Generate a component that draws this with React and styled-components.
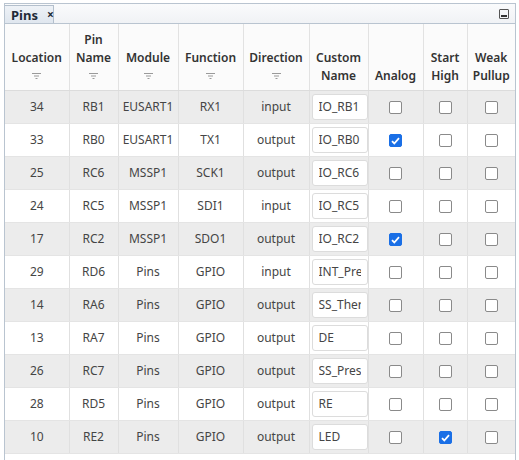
import React from 'react'
import styled, { createGlobalStyle } from 'styled-components'

const GlobalStyle = createGlobalStyle`
  html, body {
    margin: 0;
    padding: 0;
    background: #ffffff;
  }
  body {
    font-family: "Noto Sans", "Open Sans", sans-serif;
  }
`

const Panel = styled.div`
  margin: 3px 0 0 4px;
  width: 512px;
  height: 470px;
  box-sizing: border-box;
  border: 1px solid #b9c4d0;
  background: #fff;
  overflow: hidden;
`

const TabBar = styled.div`
  display: flex;
  align-items: flex-end;
  justify-content: space-between;
  height: 19px;
  background: linear-gradient(#fafbfc, #f0f2f5);
  border-bottom: 1px solid #b9c4d0;
`

const Tab = styled.div`
  display: flex;
  align-items: center;
  gap: 9px;
  width: 49px;
  height: 18px;
  box-sizing: border-box;
  padding: 0 0 0 6px;
  background: linear-gradient(#eef2f7, #dfe6ee);
  border: 1px solid #b3bfcc;
  border-bottom: none;
  border-left: none;
  font-size: 13px;
  font-weight: 700;
  color: #1e2a38;
`

const Close = styled.span`
  font-size: 12px;
  font-weight: 700;
  line-height: 1;
`

const MinButton = styled.div`
  width: 8px;
  height: 8px;
  border: 1px solid #555;
  border-radius: 1px;
  margin: 0 6px 4px 0;
  display: flex;
  align-items: center;
  justify-content: center;
  &::after {
    content: '';
    width: 6px;
    height: 2px;
    background: #333;
    margin-top: 3px;
  }
`

const Table = styled.table`
  width: 510px;
  table-layout: fixed;
  border-collapse: collapse;
  font-size: 12px;
  color: #454545;
`

const HeadCell = styled.th`
  height: 66px;
  box-sizing: border-box;
  padding: 0 2px 5px;
  vertical-align: bottom;
  text-align: center;
  font-weight: 600;
  font-size: 12px;
  line-height: 18px;
  color: #333;
  background: #fbfbfb;
  border-right: 1px solid #e2e2e2;
  border-bottom: 1px solid #dcdcdc;
  &:last-child {
    border-right: none;
  }
`

const FilterSlot = styled.div`
  height: 18px;
  display: flex;
  align-items: center;
  justify-content: center;
`

const Row = styled.tr`
  background: ${p => (p.$shade ? '#ececec' : '#ffffff')};
`

const Cell = styled.td`
  height: 33px;
  box-sizing: border-box;
  padding: 0 2px;
  text-align: center;
  vertical-align: middle;
  border-right: 1px solid #e0e0e0;
  border-bottom: 1px solid #e4e4e4;
  white-space: nowrap;
  &:last-child {
    border-right: none;
  }
`

const NameInput = styled.input`
  display: block;
  width: 56px;
  height: 26px;
  box-sizing: border-box;
  margin: 0 auto;
  padding: 0 6px;
  background: #fff;
  border: 1px solid #dcdcdc;
  border-radius: 3px;
  outline: none;
  font-family: inherit;
  font-size: 12px;
  color: #454545;
`

const Box = styled.span`
  display: inline-flex;
  align-items: center;
  justify-content: center;
  width: 13px;
  height: 13px;
  box-sizing: border-box;
  border-radius: 2px;
  vertical-align: middle;
  border: 1px solid ${p => (p.$on ? '#1a6fe6' : '#8a8a8a')};
  background: ${p => (p.$on ? '#1a6fe6' : '#ffffff')};
`

const cols = [64, 49, 60, 65, 66, 59, 55, 44, 48]

const headers = [
  { label: ['Location'], filter: true },
  { label: ['Pin', 'Name'], filter: true },
  { label: ['Module'], filter: true },
  { label: ['Function'], filter: true },
  { label: ['Direction'], filter: true },
  { label: ['Custom', 'Name'] },
  { label: ['Analog'] },
  { label: ['Start', 'High'] },
  { label: ['Weak', 'Pullup'] },
]

const pins = [
  ['34', 'RB1', 'EUSART1', 'RX1', 'input', 'IO_RB1', false, false],
  ['33', 'RB0', 'EUSART1', 'TX1', 'output', 'IO_RB0', true, false],
  ['25', 'RC6', 'MSSP1', 'SCK1', 'output', 'IO_RC6', false, false],
  ['24', 'RC5', 'MSSP1', 'SDI1', 'input', 'IO_RC5', false, false],
  ['17', 'RC2', 'MSSP1', 'SDO1', 'output', 'IO_RC2', true, false],
  ['29', 'RD6', 'Pins', 'GPIO', 'input', 'INT_Pressure', false, false],
  ['14', 'RA6', 'Pins', 'GPIO', 'output', 'SS_Thermo', false, false],
  ['13', 'RA7', 'Pins', 'GPIO', 'output', 'DE', false, false],
  ['26', 'RC7', 'Pins', 'GPIO', 'output', 'SS_Pressure', false, false],
  ['28', 'RD5', 'Pins', 'GPIO', 'output', 'RE', false, false],
  ['10', 'RE2', 'Pins', 'GPIO', 'output', 'LED', false, true],
]

function FilterIcon() {
  return (
    <FilterSlot>
      <svg width="9" height="6" viewBox="0 0 9 6">
        <path d="M0 0.5h9M2 3h5M3.5 5.5h2" stroke="#9a9a9a" strokeWidth="1" />
      </svg>
    </FilterSlot>
  )
}

function Check({ on }) {
  return (
    <Box $on={on}>
      {on && (
        <svg width="9" height="8" viewBox="0 0 9 8">
          <path d="M1 4.2l2.3 2.3L8 1.2" fill="none" stroke="#fff" strokeWidth="1.8" />
        </svg>
      )}
    </Box>
  )
}

export default function App() {
  return (
    <>
      <GlobalStyle />
      <Panel>
        <TabBar>
          <Tab>
            Pins <Close>×</Close>
          </Tab>
          <MinButton />
        </TabBar>
        <Table>
          <colgroup>
            {cols.map((w, i) => (
              <col key={i} style={{ width: w }} />
            ))}
          </colgroup>
          <thead>
            <tr>
              {headers.map((h, i) => (
                <HeadCell key={i}>
                  {h.label.map(l => (
                    <div key={l}>{l}</div>
                  ))}
                  {h.filter && <FilterIcon />}
                </HeadCell>
              ))}
            </tr>
          </thead>
          <tbody>
            {pins.map((p, i) => (
              <Row key={p[0]} $shade={i % 2 === 0}>
                <Cell>{p[0]}</Cell>
                <Cell>{p[1]}</Cell>
                <Cell>{p[2]}</Cell>
                <Cell>{p[3]}</Cell>
                <Cell>{p[4]}</Cell>
                <Cell>
                  <NameInput readOnly value={p[5]} />
                </Cell>
                <Cell>
                  <Check on={p[6]} />
                </Cell>
                <Cell>
                  <Check on={p[7]} />
                </Cell>
                <Cell>
                  <Check on={false} />
                </Cell>
              </Row>
            ))}
          </tbody>
        </Table>
      </Panel>
    </>
  )
}
